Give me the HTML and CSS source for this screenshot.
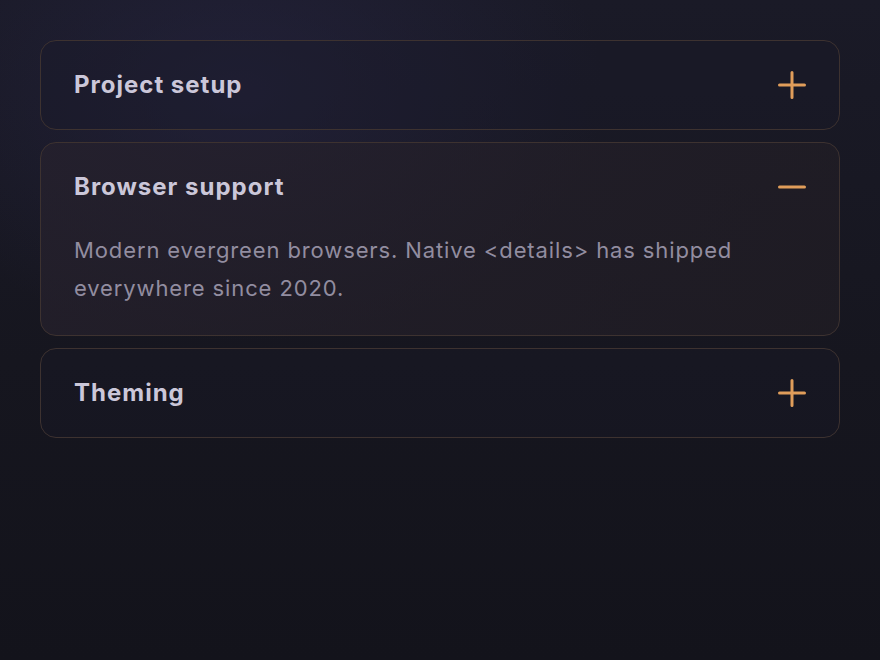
FILE: index.html
```html
<!DOCTYPE html>
<html lang="en">
<head>
<meta charset="utf-8">
<title>Accordion</title>
<link rel="stylesheet" href="styles.css">
</head>
<body>
<main class="accordion">
  <details class="item">
    <summary class="head">
      <span class="title">Project setup</span>
      <svg class="icon" viewBox="0 0 28 28" aria-hidden="true"><path d="M1.5 14h25M14 1.5v25"/></svg>
    </summary>
  </details>
  <details class="item" open>
    <summary class="head">
      <span class="title">Browser support</span>
      <svg class="icon" viewBox="0 0 28 28" aria-hidden="true"><path d="M1.5 14h25"/></svg>
    </summary>
    <p class="body">Modern evergreen browsers. Native &lt;details&gt; has shipped everywhere since 2020.</p>
  </details>
  <details class="item">
    <summary class="head">
      <span class="title">Theming</span>
      <svg class="icon" viewBox="0 0 28 28" aria-hidden="true"><path d="M1.5 14h25M14 1.5v25"/></svg>
    </summary>
  </details>
</main>
</body>
</html>
```

FILE: styles.css
```css
* { box-sizing: border-box; }
html, body { height: 100%; }
body {
  margin: 0;
  padding: 40px;
  font-family: Inter, "Noto Sans", sans-serif;
  background:
    radial-gradient(ellipse 520px 360px at 240px 90px, rgba(40, 38, 70, 0.55), rgba(40, 38, 70, 0) 70%),
    linear-gradient(180deg, #1a1a27 0%, #16161f 55%, #13131b 100%);
  color: #c9c5d6;
}
.accordion {
  display: flex;
  flex-direction: column;
  gap: 12px;
}
.item {
  border: 1px solid #3d3230;
  border-radius: 16px;
  background: rgba(26, 26, 40, 0.35);
}
.item[open] {
  background: linear-gradient(120deg, rgba(38, 33, 45, 0.75), rgba(33, 29, 36, 0.7));
}
.head {
  list-style: none;
  display: flex;
  align-items: center;
  justify-content: space-between;
  padding: 28px 33px 28px 33px;
  cursor: pointer;
}
.head::-webkit-details-marker { display: none; }
.title {
  font-size: 24px;
  line-height: 32px;
  font-weight: 700;
  letter-spacing: 1px;
  color: #cbc7d9;
}
.icon {
  width: 28px;
  height: 28px;
  fill: none;
  stroke: #e09d5a;
  stroke-width: 3;
  stroke-linecap: round;
}
.body {
  margin: 0;
  padding: 0 33px 28px;
  font-size: 22px;
  line-height: 38px;
  letter-spacing: 0.88px;
  color: #928da0;
}
```
